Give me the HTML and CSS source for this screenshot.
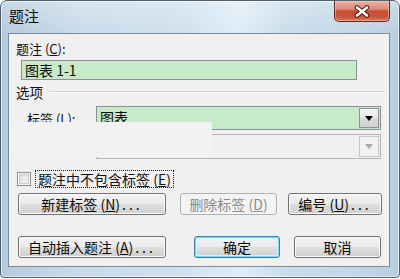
FILE: index.html
```html
<!DOCTYPE html>
<html lang="zh-CN">
<head>
<meta charset="utf-8">
<title>题注</title>
<link rel="stylesheet" href="styles.css">
</head>
<body>
<div class="window">
  <div class="titlebar">
    <span class="title">题注</span>
    <button class="close" aria-label="关闭">
      <svg class="close-x" width="16" height="13" viewBox="0 0 16 13">
        <path d="M3 2.5 L13 10.5 M13 2.5 L3 10.5" stroke="#4a1710" stroke-width="4.6" stroke-linecap="round"/>
        <path d="M3 2.5 L13 10.5 M13 2.5 L3 10.5" stroke="#ffffff" stroke-width="2.6" stroke-linecap="round"/>
      </svg>
    </button>
  </div>
  <div class="client">
    <div class="lbl-caption">题注 (<u>C</u>):</div>
    <div class="field">图表 1-1</div>
    <div class="group-head"><span>选项</span><span class="rule"></span></div>
    <div class="row row-label">
      <span class="row-lbl">标签 (<u>L</u>):</span>
      <div class="combo combo-green">
        <span class="combo-text">图表</span>
        <span class="drop"><svg width="8" height="5" viewBox="0 0 8 5"><path d="M0 0 H8 L4 5 Z" fill="#000"/></svg></span>
      </div>
    </div>
    <div class="row row-pos">
      <span class="row-lbl">位置 (<u>P</u>):</span>
      <div class="combo combo-disabled">
        <span class="combo-text"></span>
        <span class="drop drop-disabled"><svg width="8" height="5" viewBox="0 0 8 5"><path d="M0 0 H8 L4 5 Z" fill="#a9a9a9"/></svg></span>
      </div>
    </div>
    <div class="check-row">
      <span class="checkbox"></span>
      <span class="check-lbl">题注中不包含标签 (<u>E</u>)</span>
    </div>
    <div class="btn-row btn-row1">
      <button class="btn btn-new">新建标签 (<u>N</u>)<span class="dots">...</span></button>
      <button class="btn btn-del" disabled>删除标签 (<u>D</u>)</button>
      <button class="btn btn-num">编号 (<u>U</u>)<span class="dots">...</span></button>
    </div>
    <div class="btn-row btn-row2">
      <button class="btn btn-auto">自动插入题注 (<u>A</u>)<span class="dots">...</span></button>
      <button class="btn btn-ok is-default">确定</button>
      <button class="btn btn-cancel">取消</button>
    </div>
    <div class="mask"></div>
  </div>
</div>
</body>
</html>
```

FILE: styles.css
```css
* { box-sizing: border-box; }

html, body {
  margin: 0;
  padding: 0;
}

body {
  width: 400px;
  height: 279px;
  overflow: hidden;
  background: #ffffff;
  font-family: "Noto Sans CJK SC", "Noto Sans", sans-serif;
  font-size: 13px;
  color: #111111;
}

u { text-decoration: underline; text-underline-offset: 1px; }

.window {
  width: 400px;
  height: 278px;
  border: 1px solid #52606e;
  border-radius: 7px 7px 4px 4px;
  padding: 0 9px 0 7px;
  display: flex;
  flex-direction: column;
  background:
    linear-gradient(180deg, rgba(255,255,255,0.28) 0px, rgba(255,255,255,0) 34px),
    linear-gradient(90deg, #b4cadd 0%, #c9dbe9 20%, #cfe0ed 45%, #dfecf6 60%, #c9dcea 72%, #c2d7e7 88%, #b7cee1 100%);
  box-shadow: inset 0 0 0 1px rgba(255,255,255,0.55);
}

.titlebar {
  height: 32px;
  flex: none;
  display: flex;
  align-items: flex-start;
}

.title {
  padding: 5px 0 0 1px;
  font-size: 15px;
  line-height: 20px;
  color: #0b0b0b;
}

.close {
  margin-left: auto;
  width: 56px;
  height: 21px;
  padding: 0;
  border: 1px solid #5c2a20;
  border-top: none;
  border-radius: 0 0 5px 5px;
  background: linear-gradient(180deg, #eab2a3 0%, #dc8c76 40%, #c54a31 52%, #c8573d 80%, #d77a5f 100%);
  box-shadow: inset 0 0 0 1px rgba(255,220,210,0.45);
  display: flex;
  align-items: center;
  justify-content: center;
}

.close-x { display: block; }

.client {
  position: relative;
  height: 234px;
  flex: none;
  border: 1px solid #7c8b99;
  background: #f0f0f0;
  padding-top: 7px;
}

.lbl-caption {
  margin-left: 7px;
  height: 16px;
  line-height: 16px;
  font-size: 13px;
}

.field {
  margin: 3px 0 0 12px;
  width: 336px;
  height: 20px;
  border: 1px solid #8b9095;
  background: #c7eac8;
  font-size: 14px;
  line-height: 18px;
  padding-left: 3px;
  color: #0a0a0a;
}

.group-head {
  margin-top: 4px;
  height: 16px;
  padding-left: 7px;
  display: flex;
  align-items: center;
  font-size: 13.5px;
  line-height: 16px;
}

.rule {
  flex: 1;
  height: 2px;
  margin: 0 4px 0 6px;
  border-top: 1px solid #d4d6d8;
  border-bottom: 1px solid #ffffff;
}

.row {
  display: flex;
  align-items: center;
}

.row-label { margin-top: 6px; height: 24px; }
.row-pos { margin-top: 4px; height: 25px; }

.row-lbl {
  width: 87px;
  padding-left: 18px;
  font-size: 13px;
  white-space: nowrap;
}

.combo {
  width: 285px;
  height: 100%;
  display: flex;
  align-items: stretch;
  border: 1px solid #8b9095;
}

.combo-green { background: #c7eac8; }

.combo-disabled {
  background: #f0f0f0;
  border-color: #b3b6b9;
}

.combo-text {
  flex: 1;
  padding-left: 3px;
  font-size: 14px;
  line-height: 20px;
  color: #0a0a0a;
}

.drop {
  width: 20px;
  margin: 1px;
  border: 1px solid #8e9398;
  background: linear-gradient(180deg, #f5f5f5 0%, #e9e9e9 50%, #dadada 51%, #d2d2d2 100%);
  display: flex;
  align-items: center;
  justify-content: center;
}

.drop-disabled {
  border-color: #c4c7ca;
  background: #f2f2f2;
}

.check-row {
  margin-top: 11px;
  height: 18px;
  padding-left: 8px;
  display: flex;
  align-items: center;
}

.checkbox {
  width: 14px;
  height: 14px;
  border: 1px solid #8e8f8f;
  background: linear-gradient(135deg, #d3d5d8 0%, #e9eaeb 55%, #f8f8f8 100%);
  box-shadow: inset 0 0 0 1px #f6f6f6, inset 0 0 0 2px #c9cbce;
}

.check-lbl {
  margin-left: 4px;
  height: 18px;
  padding: 0 2px;
  border: 1px dotted #222222;
  font-size: 14px;
  line-height: 16px;
  white-space: nowrap;
}

.btn-row {
  display: flex;
  height: 22px;
  padding-left: 9px;
}

.btn-row1 { margin-top: 5px; }
.btn-row2 { margin-top: 21px; }

.btn {
  height: 22px;
  padding: 0;
  border: 1px solid #707070;
  border-radius: 3px;
  background: linear-gradient(180deg, #f3f3f3 0%, #ebebeb 48%, #dedede 52%, #cfcfcf 100%);
  box-shadow: inset 0 0 0 1px #fbfbfb;
  font-family: inherit;
  font-size: 14px;
  line-height: 20px;
  color: #0a0a0a;
  white-space: nowrap;
}

.dots { letter-spacing: 3px; margin-left: 2px; }

.btn-new { width: 148px; }
.btn-del { width: 97px; margin-left: 14px; }
.btn-num { width: 94px; margin-left: 11px; }
.btn-auto { width: 148px; }
.btn-ok { width: 86px; margin-left: 28px; }
.btn-cancel { width: 87px; margin-left: 14px; }

.btn:disabled {
  border-color: #adb2b5;
  background: #f4f4f4;
  box-shadow: none;
  color: #8a8a8a;
}

.btn.is-default {
  border-color: #3c7fb1;
  box-shadow: inset 0 0 0 1px #7fd3f5, inset 0 0 0 2px #d8f0fb;
}

.mask {
  position: absolute;
  left: 0;
  top: 88px;
  width: 203px;
  height: 35px;
  background: #f3f2f2;
}
```
